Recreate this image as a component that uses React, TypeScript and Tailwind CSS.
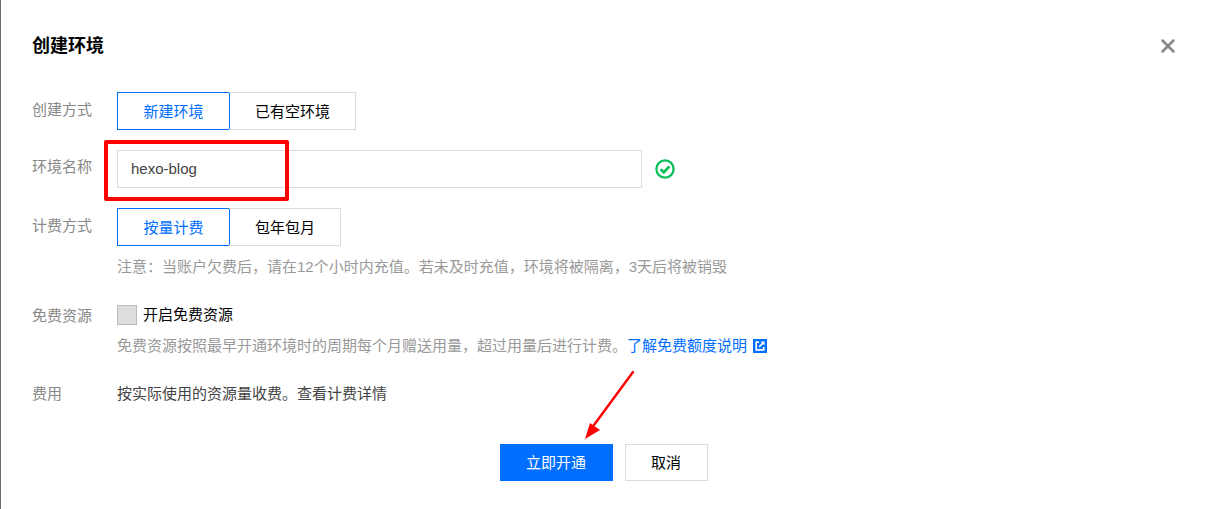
import { X } from 'lucide-react';

function Segment({ options, widths }: { options: string[]; widths: string[] }) {
  return (
    <div className="flex h-[38px]">
      {options.map((label, i) => (
        <div
          key={label}
          className={
            i === 0
              ? `flex items-center justify-center border border-[#006eff] pt-px text-[#006eff] ${widths[i]}`
              : `-ml-px flex items-center justify-center border border-[#dcdcdc] border-l-0 pl-px pt-px text-black ${widths[i]}`
          }
        >
          {label}
        </div>
      ))}
    </div>
  );
}

function Row({ label, labelClass, children }: { label: string; labelClass: string; children: React.ReactNode }) {
  return (
    <div className="flex">
      <div className={`w-[85px] shrink-0 text-[#888888] ${labelClass}`}>{label}</div>
      <div className="min-w-0 flex-1">{children}</div>
    </div>
  );
}

export default function App() {
  return (
    <div className="relative h-[509px] w-[1207px] overflow-hidden bg-white pl-[32px] font-['Liberation_Sans','Noto_Sans_CJK_SC',sans-serif] text-[15px] leading-[20px] text-black">
      {/* page behind the dialog */}
      <div className="absolute left-0 top-0 h-full w-px bg-[#6b7078]" />

      <div className="flex h-[92px] items-start justify-between pr-[28px] pt-[34px]">
        <h1 className="text-[18px] font-bold leading-[24px] text-black">创建环境</h1>
        <X className="mt-[1px] h-[22px] w-[22px] text-[#888888]" strokeWidth={2.8} />
      </div>

      <div className="flex flex-col">
        <Row label="创建方式" labelClass="pt-[8px]">
          <Segment options={['新建环境', '已有空环境']} widths={['w-[113px]', 'w-[127px]']} />
        </Row>

        <div className="mt-[20px]">
          <Row label="环境名称" labelClass="pt-[7px]">
            <div className="flex items-center">
              <div className="flex h-[38px] w-[525px] items-center border border-[#dcdcdc] pl-[13px] text-[#444444]">
                hexo-blog
              </div>
              <svg className="ml-[13px] h-[20px] w-[20px]" viewBox="0 0 20 20" fill="none">
                <circle cx="10" cy="10" r="8.6" stroke="#0abf5b" strokeWidth="2.3" />
                <path d="M5.6 10.2 L8.8 13.2 L14.4 7.6" stroke="#0abf5b" strokeWidth="2.8" />
              </svg>
            </div>
          </Row>
        </div>

        <div className="mt-[20px]">
          <Row label="计费方式" labelClass="pt-[8px]">
            <Segment options={['按量计费', '包年包月']} widths={['w-[113px]', 'w-[112px]']} />
            <p className="mt-[11px] text-[#999999]">
              注意：当账户欠费后，请在12个小时内充值。若未及时充值，环境将被隔离，3天后将被销毁
            </p>
          </Row>
        </div>

        <div className="mt-[28px]">
          <Row label="免费资源" labelClass="pt-px">
            <div className="flex h-[20px] items-center">
              <span className="h-[20px] w-[20px] border border-[#bbbbbb] bg-[#dddddd]" />
              <span className="ml-[6px]">开启免费资源</span>
            </div>
            <p className="mt-[11px] flex items-center text-[#999999]">
              免费资源按照最早开通环境时的周期每个月赠送用量，超过用量后进行计费。
              <span className="text-[#006eff]">了解免费额度说明</span>
              <svg className="ml-[6px] h-[14px] w-[14px]" viewBox="0 0 14 14" fill="none">
                <rect width="14" height="14" fill="#006eff" />
                <path d="M6 3.2 H3.2 V10.8 H10.8 V8" stroke="#ffffff" strokeWidth="1.7" />
                <path d="M6.2 7.8 L10.6 3.4" stroke="#ffffff" strokeWidth="1.7" />
                <path d="M7.4 2.4 H11.6 V6.6 Z" fill="#ffffff" />
              </svg>
            </p>
          </Row>
        </div>

        <div className="mt-[28px]">
          <Row label="费用" labelClass="">
            <p className="text-[#444444]">按实际使用的资源量收费。查看计费详情</p>
          </Row>
        </div>

        <div className="mt-[40px] flex justify-center gap-[12px] pr-[32px]">
          <button className="h-[37px] w-[113px] bg-[#006eff] text-white">立即开通</button>
          <button className="h-[37px] w-[83px] border border-[#dcdcdc] bg-white text-black">取消</button>
        </div>
      </div>

      {/* red annotations drawn over the dialog */}
      <div className="absolute left-[104px] top-[140px] h-[61px] w-[185px] rounded-[2px] border-[4px] border-[#ff0000]" />
      <svg className="absolute left-[580px] top-[365px] h-[80px] w-[60px]" viewBox="0 0 60 80" fill="none">
        <path d="M53 7 L14 60" stroke="#ff0000" strokeWidth="2.4" strokeLinecap="round" />
        <path d="M5 74 L10 58 L20 65 Z" fill="#ff0000" />
      </svg>
    </div>
  );
}
